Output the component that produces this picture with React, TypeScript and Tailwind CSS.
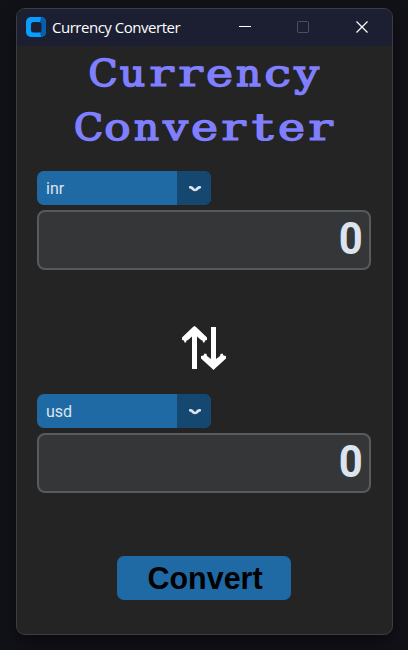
import React from "react";

const glyphStyle: Record<string, string> = {
  C: "scale-x-100 [-webkit-text-stroke-width:1.600px]",
  u: "scale-x-[1.04] [-webkit-text-stroke-width:1.600px]",
  r: "scale-x-[1.36] [-webkit-text-stroke-width:1.100px]",
  e: "scale-x-[1.2] [-webkit-text-stroke-width:1.400px]",
  n: "scale-x-[1.02] [-webkit-text-stroke-width:1.600px]",
  c: "scale-x-[1.25] [-webkit-text-stroke-width:1.400px]",
  y: "scale-x-[1.15] [-webkit-text-stroke-width:1.500px]",
  o: "scale-x-[1.15] [-webkit-text-stroke-width:1.500px]",
  v: "scale-x-[1.15] [-webkit-text-stroke-width:1.500px]",
  t: "scale-x-[1.45] [-webkit-text-stroke-width:1.100px]",
};

// A word set in fixed-width cells, typewriter style.
function SlabWord({ text }: { text: string }) {
  return (
    <span className="flex h-[54px] justify-center">
      {text.split("").map((ch, i) => (
        <span key={i} className={`flex w-[29px] justify-center ${glyphStyle[ch]}`}>
          {ch}
        </span>
      ))}
    </span>
  );
}

function TitleBar() {
  return (
    <header className="flex h-[37px] shrink-0 items-center bg-[#1b1f31] pl-[9px]">
      <svg className="-mt-[1px]" width="20" height="20" viewBox="0 0 20 20">
        <rect width="20" height="20" rx="5" fill="#0a9cff" />
        <path d="M15 0a5 5 0 0 1 5 5v10a5 5 0 0 1-5 5l-1-5V5z" fill="#0560ac" />
        <rect x="5" y="5" width="10.500" height="10.500" rx="2.500" fill="#1b1f31" />
      </svg>
      <span className="-mt-[1px] ml-[6px] w-[128px] whitespace-nowrap font-['Open_Sans','Noto_Sans',sans-serif] text-[15px] leading-5 tracking-[-0.480px] text-white">
        Currency Converter
      </span>
      <svg className="-mt-[1px] ml-[58px]" width="132" height="14" viewBox="0 0 132 14" fill="none">
        <path d="M1 6.500h12" stroke="#fff" />
        <rect x="59.500" y="1.500" width="11" height="11" rx="1" stroke="#4c505e" />
        <path d="M118.500 1.500l11 11m0-11l-11 11" stroke="#fff" strokeWidth="1.200" />
      </svg>
    </header>
  );
}

function CurrencyField({ code }: { code: string }) {
  return (
    <section className="flex flex-col gap-[5px]">
      <div className="flex h-[34px] w-[174px] overflow-hidden rounded-[7px] bg-[#1f6aa5]">
        <span className="flex-1 pl-[9px] font-[Roboto,sans-serif] text-[16px] leading-[35px] text-[#dce4ee]">
          {code}
        </span>
        <span className="flex w-[34px] items-center justify-center bg-[#144870] pl-[2px] pt-[1px]">
          <svg width="14" height="8" viewBox="0 0 14 8" fill="none">
            <path
              d="M2.200 2.300L3.500 2.500L5.500 4.500Q7 5.500 8.500 4.500L10.500 2.500L11.800 2.300"
              stroke="#dce4ee"
              strokeWidth="2.700"
              strokeLinecap="round"
              strokeLinejoin="round"
            />
          </svg>
        </span>
      </div>
      <div className="flex h-[60px] w-[334px] justify-end rounded-[8px] border-2 border-[#565b5e] bg-[#343638] pr-[6px] font-[Roboto,sans-serif] text-[45px] font-bold leading-[54px] text-[#dce4ee]">
        <span className="origin-right scale-x-[0.93]">0</span>
      </div>
    </section>
  );
}

export default function App() {
  return (
    <div className="h-[650px] w-[408px] overflow-hidden bg-[#111118] pl-4 pt-2">
      <main className="flex h-[627px] w-[377px] flex-col overflow-hidden rounded-[9px] border border-[#3d3d40] bg-[#242424] shadow-[0_8px_18px_rgba(0,0,0,0.4)]">
        <TitleBar />
        <h1 className="h-[108px] font-['DejaVu_Serif',serif] text-[38px] leading-[54px] text-[#7f7fff]">
          <SlabWord text="Currency" />
          <SlabWord text="Converter" />
        </h1>
        <div className="mt-[17px] pl-5">
          <CurrencyField code="inr" />
        </div>
        <div className="flex h-[124px] items-center justify-center pr-[2px] pt-[31px]">
          <svg width="46" height="46" viewBox="0 0 46 46" fill="#fff">
            <path d="M11 44V11.500L7 15L5.500 15.500L5 17.500L3.500 17.500L3 15.500L1 15V12.500L12 2L13.500 1L15 2L26 12.500V15L24 15.500L23.500 17.500L22 17.500L21.500 15.500L20 15L16 11.500V44z" />
            <path d="M30 2V34L26 31L25.500 29L23.500 28.500L22.500 30.500L20 31V33.500L31 43.500L32.500 45L34 43.500L45 33.500V31L42.500 30.500L41.500 28.500L39.500 29L39 31L35 34V2z" />
          </svg>
        </div>
        <div className="pl-5">
          <CurrencyField code="usd" />
        </div>
        <button className="ml-[100px] mt-[63px] h-11 w-[174px] rounded-[7px] bg-[#1f6aa5] pl-[2px] pt-[1px] font-['Liberation_Sans',Arial,sans-serif] text-[30.500px] font-bold leading-[43px] text-black">
          Convert
        </button>
      </main>
    </div>
  );
}
